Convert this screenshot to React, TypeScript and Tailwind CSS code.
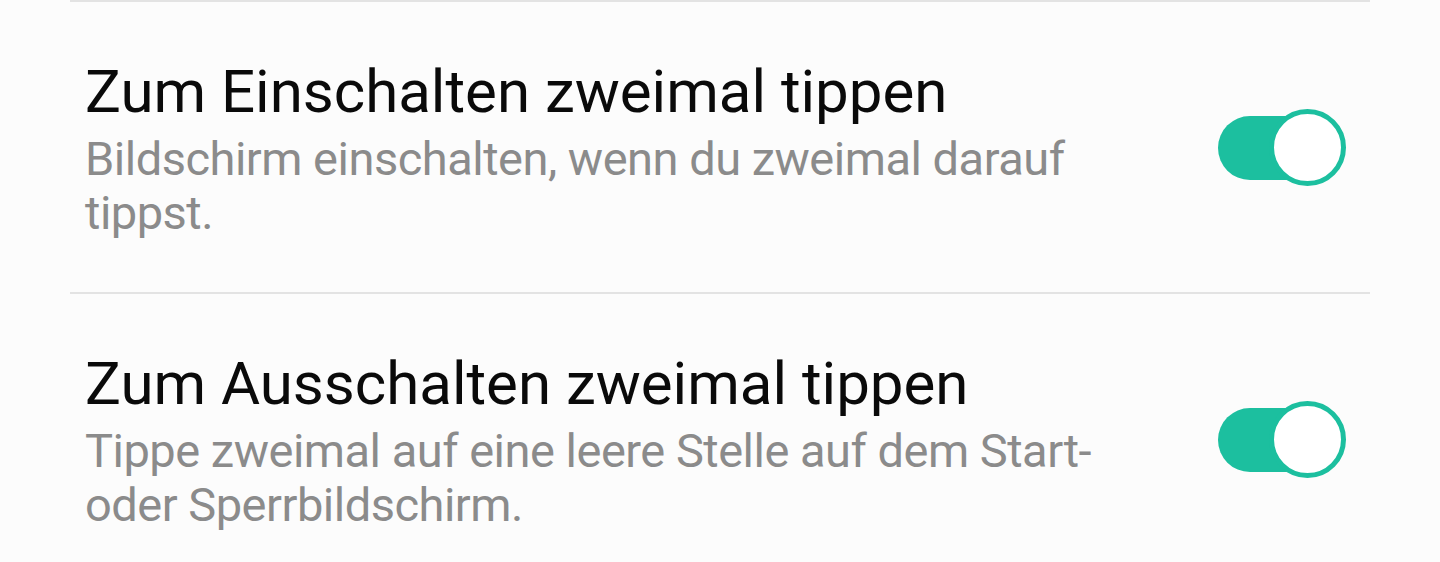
export default function App() {
  const items = [
    {
      title: "Zum Einschalten zweimal tippen",
      desc: ["Bildschirm einschalten, wenn du zweimal darauf", "tippst."],
    },
    {
      title: "Zum Ausschalten zweimal tippen",
      desc: ["Tippe zweimal auf eine leere Stelle auf dem Start-", "oder Sperrbildschirm."],
    },
  ];

  return (
    <div className="h-[562px] w-[1440px] overflow-hidden bg-[#fcfcfc] font-['Roboto',sans-serif]">
      {items.map((item) => (
        <div key={item.title}>
          <div className="mx-[70px] h-[2px] bg-[#e3e3e3]" />
          <div className="flex h-[290px] items-center pl-[85px] pr-[94px]">
            <div className="flex-1 mt-[4px]">
              <div className="text-[60px] leading-[66px] text-[#0a0a0a]">{item.title}</div>
              <div className="mt-[7px] text-[47px] leading-[54px] tracking-[-0.5px] text-[#8b8b8b]">
                {item.desc.map((l) => (
                  <div key={l}>{l}</div>
                ))}
              </div>
            </div>
            <Toggle />
          </div>
        </div>
      ))}
    </div>
  );
}

function Toggle() {
  return (
    <div className="relative h-[77px] w-[128px]">
      <div className="absolute left-0 top-[7px] h-[64px] w-[100px] rounded-full bg-[#1cbf9f]" />
      <div className="absolute right-0 top-0 h-[77px] w-[77px] rounded-full border-[5px] border-[#1cbf9f] bg-white" />
    </div>
  );
}
